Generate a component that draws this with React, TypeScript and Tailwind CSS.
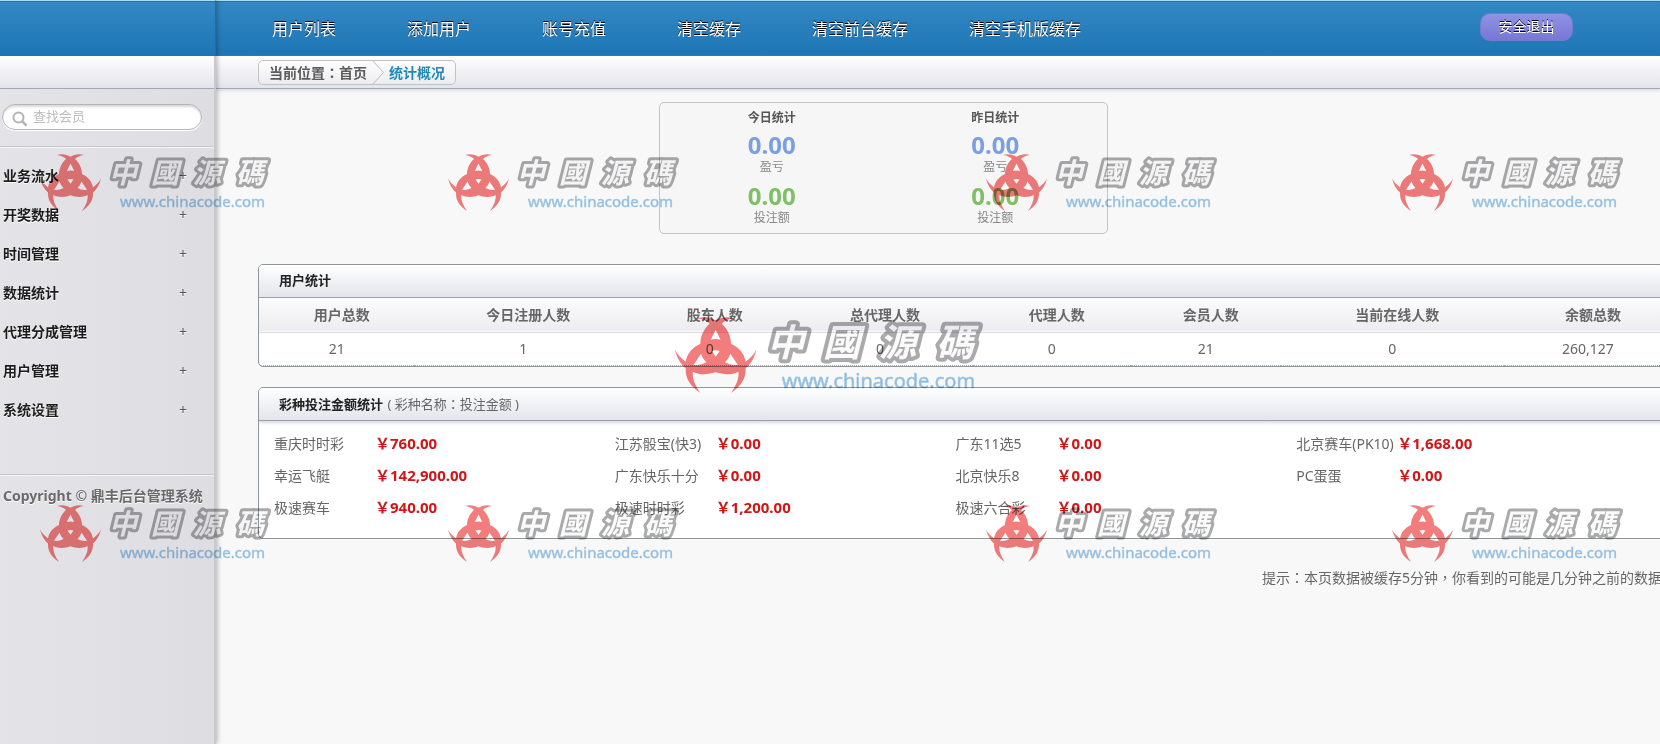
import React from 'react';

const navItems = ['用户列表', '添加用户', '账号充值', '清空缓存', '清空前台缓存', '清空手机版缓存'];

const menuItems = ['业务流水', '开奖数据', '时间管理', '数据统计', '代理分成管理', '用户管理', '系统设置'];

const summaries = [
  { title: '今日统计', profit: '0.00', bets: '0.00' },
  { title: '昨日统计', profit: '0.00', bets: '0.00' },
];

const userStats = [
  { label: '用户总数', value: '21', width: 'w-[11%]' },
  { label: '今日注册人数', value: '1', width: 'w-[15.4%]' },
  { label: '股东人数', value: '0', width: 'w-[11%]' },
  { label: '总代理人数', value: '0', width: 'w-[13.1%]' },
  { label: '代理人数', value: '0', width: 'w-[11.2%]' },
  { label: '会员人数', value: '21', width: 'w-[10.6%]' },
  { label: '当前在线人数', value: '0', width: 'w-[15.8%]' },
  { label: '余额总数', value: '260,127', width: 'w-[11.9%]' },
];

const lotteries = [
  ['重庆时时彩', '760.00'],
  ['江苏骰宝(快3)', '0.00'],
  ['广东11选5', '0.00'],
  ['北京赛车(PK10)', '1,668.00'],
  ['幸运飞艇', '142,900.00'],
  ['广东快乐十分', '0.00'],
  ['北京快乐8', '0.00'],
  ['PC蛋蛋', '0.00'],
  ['极速赛车', '940.00'],
  ['极速时时彩', '1,200.00'],
  ['极速六合彩', '0.00'],
];

const topBar = 'h-14 border-t border-[#a9dcf2] bg-linear-to-b from-[#3289c5] to-[#1e75b3] shadow-[inset_0_1px_0_#2a719f]';
const subBar = 'h-[33px] border-b border-[#a2a8b8] bg-linear-to-b from-white to-[#e4e4ec]';
const panel = 'overflow-hidden rounded-[5px] border border-[#8f949e] bg-white';
const panelHead =
  'h-[33px] border-b border-[#9a9fab] bg-linear-to-b from-white to-[#e3e5ec] pl-5 text-[13px] leading-[31px] text-[#666]';

// Full-width punctuation set in the middle of its square.
function Mark({ children }: { children: string }) {
  return <span className='font-["Noto_Sans_CJK_TC",sans-serif]'>{children}</span>;
}

function Watermark({ className }: { className: string }) {
  const glyphs: [string, number][] = [
    ['中', 83],
    ['國', 125],
    ['源', 167],
    ['碼', 210],
  ];
  return (
    <svg aria-hidden="true" viewBox="0 0 234 60" className={`pointer-events-none absolute z-20 overflow-visible mix-blend-multiply ${className}`}>
      <path
        fill="#f37c7c"
        fillRule="evenodd"
        d="M17 1C22 -.6 27 .6 30.5 2.8C34 .6 39 -.6 44 1C40 1.6 37 3 35 5C39.5 9 42 14.5 42 20C47.5 22.5 52 27 53 33.5C56 31 59 28.5 61 24.5C59.5 31 56.5 35.5 53 38.5C53.4 46.5 49 52.5 42 57C46 51 48.2 46 47.6 41C42 43.8 36 43.3 30.5 41.3C25 43.3 19 43.8 13.4 41C12.8 46 15 51 19 57C12 52.5 7.6 46.5 8 38.5C4.5 35.5 1.5 31 0 24.5C2 28.5 5 31 8 33.5C9 27 13.5 22.5 19 20C19 14.5 21.5 9 26 5C24 3 21 1.6 17 1ZM30.5 9.5L26.8 17Q30.5 16 34.2 17ZM27.5 25.5Q30.5 24.5 33.5 25.5L30.5 29.8ZM19.5 27.5L14 35.8Q19 36.5 23.5 34Q20.5 31.2 19.5 27.5ZM41.5 27.5Q40.5 31.2 37.5 34Q42 36.5 47 35.8Z"
      />
      <g
        fontFamily='"Noto Sans CJK TC", sans-serif'
        fontSize="28"
        fontWeight="700"
        fontStyle="italic"
        textAnchor="middle"
        opacity="0.85"
        strokeLinejoin="round"
      >
        {glyphs.map(([glyph, x]) => (
          <text key={glyph} x={x} y="29" fill="#fbfbfc" stroke="#9c9c9e" strokeWidth="6" paintOrder="stroke">
            {glyph}
          </text>
        ))}
      </g>
      <text x="80" y="53" fontFamily='"Noto Sans", sans-serif' fontSize="15" fill="#8fbfe4" stroke="#a9cfec" strokeWidth="0.5">
        www.chinacode.com
      </text>
    </svg>
  );
}

function Sidebar() {
  return (
    <aside className="z-10 flex w-[216px] shrink-0 flex-col border-r-2 border-[#c9c9cd] bg-linear-to-r from-[#e4e4e8] to-[#dedee2] shadow-[1px_0_5px_rgba(0,0,0,0.3)]">
      <div className={`${topBar} -mr-0.5 border-r border-r-[#256b9e]`} />
      <div className={subBar} />
      <form className="relative px-0.5 pt-[15px] pb-4">
        <label htmlFor="member" className="sr-only">查找会员</label>
        <svg aria-hidden="true" viewBox="0 0 16 16" className="absolute top-[22px] left-3 size-4" fill="none" stroke="#b4b4b6">
          <circle cx="6.5" cy="6.5" r="5" strokeWidth="2" />
          <path d="M10.3 10.3L14.5 14.5" strokeWidth="2.5" />
        </svg>
        <input
          id="member"
          type="text"
          placeholder="查找会员"
          className="block h-[26px] w-[200px] rounded-full border border-[#b5b5b9] bg-white pb-0.5 pl-[30px] text-[13px] shadow-[inset_0_2px_2px_rgba(0,0,0,0.15),0_1px_0_#fff] outline-none placeholder:text-[#bdbdbd]"
        />
      </form>
      <nav className="border-t border-[#c6c6ca] pt-[9px] pb-[45px] shadow-[inset_0_1px_0_#f6f6f8]">
        {menuItems.map((item) => (
          <a key={item} href="#" className="flex h-[39px] items-center justify-between pr-[27px] pl-[3px] text-sm font-bold text-[#1c1c1c] [text-shadow:0_1px_0_#fff]">
            {item}
            <span className="font-normal text-[#555]">+</span>
          </a>
        ))}
      </nav>
      <p className="border-t border-[#c6c6ca] pt-2.5 pl-[3px] text-sm leading-[22px] font-bold whitespace-nowrap text-[#6a6a6a] shadow-[inset_0_1px_0_#f6f6f8] [text-shadow:0_1px_0_#fff]">
        Copyright © 鼎丰后台管理系统
      </p>
    </aside>
  );
}

export default function App() {
  return (
    <div className='relative flex min-h-screen overflow-hidden bg-[#f8f8f8] font-["Noto_Sans","Noto_Sans_CJK_SC",sans-serif] text-sm text-[#666]'>
      <Sidebar />
      <div className="min-w-0 flex-1">
        <header className={`${topBar} flex items-start justify-between pr-[87px] pl-[26px]`}>
          <nav className="flex h-14 items-center">
            {navItems.map((item) => (
              <a key={item} href="#" className="mr-px min-w-[134px] px-[30px] text-base whitespace-nowrap text-white [text-shadow:0_-1px_0_#000]">
                {item}
              </a>
            ))}
          </nav>
          <button type="button" className="mt-3 h-7 w-[93px] rounded-[10px] border border-[#6f7fd0] bg-linear-to-b from-[#9092e4] to-[#7777d4] text-sm leading-none text-white [text-shadow:0_-1px_0_#000]">
            安全退出
          </button>
        </header>
        <div className={`${subBar} pt-1 pl-[42px] shadow-[0_2px_3px_#dddde8]`}>
          <div className="flex h-[25px] w-[198px] items-center rounded-[5px] border border-[#c2c2c6] bg-linear-to-b from-[#fdfdfd] to-[#ededf1] pl-2.5 font-bold whitespace-nowrap text-[#5c5c5c]">
            <a href="#">当前位置<Mark>：</Mark>首页</a>
            <svg aria-hidden="true" viewBox="0 0 14 25" className="mr-1 ml-1 h-[25px] w-3.5" fill="none" stroke="#bcbcc0">
              <path d="M1 0L12.5 12.5L1 25" />
            </svg>
            <span className="text-[#1f8ab8]">统计概况</span>
          </div>
        </div>
        <main className="-mr-[13px] pl-[42px]">
          <section className="mt-[13px] ml-[401px] grid w-[449px] grid-cols-2 rounded-[5px] border border-[#c4c4c8] bg-[#f6f6f6] pt-[3px] pb-2 text-center text-xs">
            {summaries.map((s) => (
              <div key={s.title} className="text-[#888]">
                <h2 className="leading-6 font-bold text-[#555]">{s.title}</h2>
                <p className="text-2xl leading-[30px] font-bold text-[#7a9fe4]">{s.profit}</p>
                <p className="leading-[14px]">盈亏</p>
                <p className="mt-[7px] text-2xl leading-[30px] font-bold text-[#7fc064]">{s.bets}</p>
                <p className="leading-[14px]">投注额</p>
              </div>
            ))}
          </section>

          <section className={`${panel} mt-[30px]`}>
            <h2 className={`${panelHead} font-bold`}><span className="text-[#222]">用户统计</span></h2>
            <table className="w-full table-fixed text-center">
              <thead>
                <tr className="h-[34px] border-b border-[#dcdce0] bg-linear-to-b from-[#fbfbfc] to-[#ededf1]">
                  {userStats.map((s) => (
                    <th key={s.label} className={`${s.width} pl-2.5 font-bold`}>{s.label}</th>
                  ))}
                </tr>
              </thead>
              <tbody>
                <tr className="h-[33px] border-b border-dotted border-[#aaa]">
                  {userStats.map((s) => (
                    <td key={s.label}>{s.value}</td>
                  ))}
                </tr>
              </tbody>
            </table>
          </section>

          <section className={`${panel} mt-5`}>
            <h2 className={`${panelHead} shadow-[0_2px_3px_#d8dae2]`}>
              <span className="mr-px font-bold text-[#222]">彩种投注金额统计</span> ( 彩种名称<Mark>：</Mark>投注金额 )
            </h2>
            <dl className="grid grid-cols-4 pt-[7px] pr-[35px] pb-3.5 pl-[15px]">
              {lotteries.map(([name, amount]) => (
                <div key={name} className="flex h-8 items-center whitespace-nowrap">
                  <dt className="w-[101px] shrink-0">{name}</dt>
                  <dd className="text-[15px] font-bold text-[#d01616]">￥{amount}</dd>
                </div>
              ))}
            </dl>
          </section>

          <p className="mt-[27px] pr-[11px] text-right leading-[22px]">
            提示<Mark>：</Mark>本页数据被缓存5分钟<Mark>，</Mark>你看到的可能是几分钟之前的数据
          </p>
        </main>
      </div>

      <Watermark className="top-[154px] left-10 w-[234px]" />
      <Watermark className="top-[154px] left-[448px] w-[234px]" />
      <Watermark className="top-[154px] left-[986px] w-[234px]" />
      <Watermark className="top-[154px] left-[1392px] w-[234px]" />
      <Watermark className="top-[317px] left-[675px] w-[312px]" />
      <Watermark className="top-[505px] left-10 w-[234px]" />
      <Watermark className="top-[505px] left-[448px] w-[234px]" />
      <Watermark className="top-[505px] left-[986px] w-[234px]" />
      <Watermark className="top-[505px] left-[1392px] w-[234px]" />
    </div>
  );
}
